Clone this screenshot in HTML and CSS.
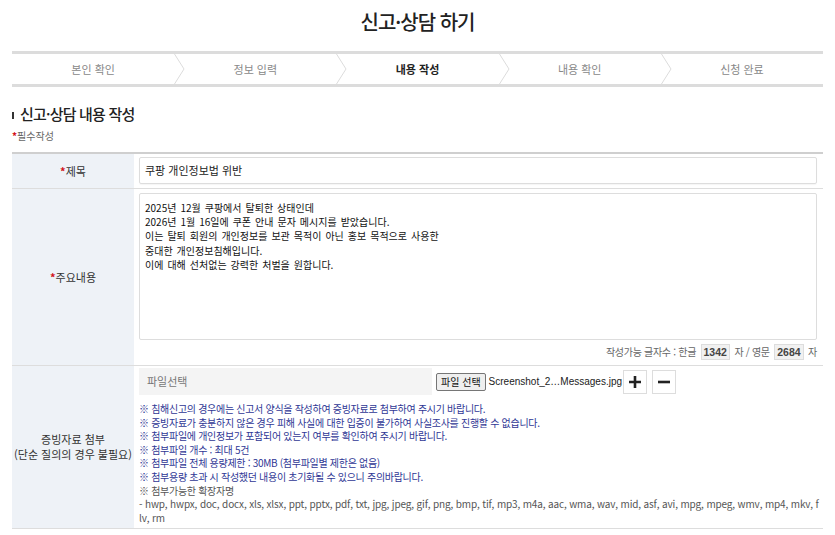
FILE: index.html
```html
<!DOCTYPE html>
<html lang="ko">
<head>
<meta charset="utf-8">
<title>신고·상담 하기</title>
<link rel="stylesheet" href="styles.css">
</head>
<body>
<div class="page">
  <h1 class="page-title">신고·상담 하기</h1>

  <ol class="steps">
    <li class="step">본인 확인<svg class="chev" width="11" height="30" viewBox="0 0 11 30"><polyline points="0.5,0 10,15 0.5,30" fill="none" stroke="#dcdcdc" stroke-width="1"/></svg></li>
    <li class="step">정보 입력<svg class="chev" width="11" height="30" viewBox="0 0 11 30"><polyline points="0.5,0 10,15 0.5,30" fill="none" stroke="#dcdcdc" stroke-width="1"/></svg></li>
    <li class="step on">내용 작성<svg class="chev" width="11" height="30" viewBox="0 0 11 30"><polyline points="0.5,0 10,15 0.5,30" fill="none" stroke="#dcdcdc" stroke-width="1"/></svg></li>
    <li class="step">내용 확인<svg class="chev" width="11" height="30" viewBox="0 0 11 30"><polyline points="0.5,0 10,15 0.5,30" fill="none" stroke="#dcdcdc" stroke-width="1"/></svg></li>
    <li class="step">신청 완료</li>
  </ol>

  <h2 class="sec-title"><span class="sec-bar"></span>신고·상담 내용 작성</h2>
  <p class="req"><span class="star">*</span>필수작성</p>

  <table class="form">
    <tr class="row-subject">
      <th><span class="star">*</span>제목</th>
      <td><div class="field">쿠팡 개인정보법 위반</div></td>
    </tr>
    <tr class="row-body">
      <th><span class="star">*</span>주요내용</th>
      <td>
        <div class="area">2025년 12월 쿠팡에서 탈퇴한 상태인데
2026년 1월 16일에 쿠폰 안내 문자 메시지를 받았습니다.
이는 탈퇴 회원의 개인정보를 보관 목적이 아닌 홍보 목적으로 사용한
중대한 개인정보침해입니다.
이에 대해 선처없는 강력한 처벌을 원합니다.</div>
        <div class="counter">작성가능 글자수 : 한글 <span class="num">1342</span> 자 / 영문 <span class="num">2684</span> 자</div>
      </td>
    </tr>
    <tr class="row-file">
      <th>증빙자료 첨부<br>(단순 질의의 경우 불필요)</th>
      <td>
        <div class="file-line">
          <div class="file-box">파일선택</div>
          <span class="file-btn">파일 선택</span>
          <span class="file-name">Screenshot_2…Messages.jpg</span>
          <span class="sq-btn"><svg width="12" height="12" viewBox="0 0 12 12"><path d="M6 0v12M0 6h12" stroke="#222" stroke-width="2.6"/></svg></span>
          <span class="sq-btn"><svg width="12" height="12" viewBox="0 0 12 12"><path d="M0 6h12" stroke="#222" stroke-width="2.6"/></svg></span>
        </div>
        <ul class="notes">
          <li class="blue">※ 침해신고의 경우에는 신고서 양식을 작성하여 증빙자료로 첨부하여 주시기 바랍니다.</li>
          <li class="blue">※ 증빙자료가 충분하지 않은 경우 피해 사실에 대한 입증이 불가하여 사실조사를 진행할 수 없습니다.</li>
          <li class="blue">※ 첨부파일에 개인정보가 포함되어 있는지 여부를 확인하여 주시기 바랍니다.</li>
          <li class="blue">※ 첨부파일 개수 : 최대 5건</li>
          <li class="blue">※ 첨부파일 전체 용량제한 : 30MB (첨부파일별 제한은 없음)</li>
          <li class="blue">※ 첨부용량 초과 시 작성했던 내용이 초기화될 수 있으니 주의바랍니다.</li>
          <li>※ 첨부가능한 확장자명</li>
          <li class="ext">- hwp, hwpx, doc, docx, xls, xlsx, ppt, pptx, pdf, txt, jpg, jpeg, gif, png, bmp, tif, mp3, m4a, aac, wma, wav, mid, asf, avi, mpg, mpeg, wmv, mp4, mkv, flv, rm</li>
        </ul>
      </td>
    </tr>
  </table>
</div>
</body>
</html>
```

FILE: styles.css
```css
* {
  box-sizing: border-box;
}

body {
  margin: 0;
  background: #fff;
  color: #333;
  font-family: "Noto Sans CJK KR", "Noto Sans", sans-serif;
}

.page {
  width: 811px;
  margin: 0 auto;
}

.page-title {
  margin: 0;
  height: 51px;
  padding-top: 8px;
  text-align: center;
  font-size: 20px;
  font-weight: 500;
  line-height: 28px;
  letter-spacing: -1px;
  color: #222;
}

/* steps */
.steps {
  display: flex;
  margin: 0;
  padding: 0;
  list-style: none;
  border-top: 3px solid #dcdcdc;
  border-bottom: 3px solid #dcdcdc;
}
.step {
  position: relative;
  flex: 1;
  height: 30px;
  line-height: 30px;
  text-align: center;
  font-size: 11px;
  color: #888;
}
.step.on {
  color: #222;
  font-weight: 700;
}
.chev {
  position: absolute;
  top: 0;
  right: -11px;
  z-index: 1;
}

/* section head */
.sec-title {
  margin: 17px 0 0;
  font-size: 15px;
  font-weight: 500;
  line-height: 20px;
  letter-spacing: -0.8px;
  color: #222;
}
.sec-bar {
  display: inline-block;
  width: 2px;
  height: 7px;
  margin-right: 6px;
  background: #333;
  vertical-align: 1px;
}
.req {
  margin: 5px 0 9px;
  font-size: 10px;
  line-height: 14px;
  color: #666;
}
.star {
  color: #d2121a;
  font-weight: 700;
}

/* form table */
.form {
  width: 100%;
  border-collapse: collapse;
  border-top: 2px solid #cfcfcf;
  border-bottom: 1px solid #ddd;
}
.form tr {
  border-bottom: 1px solid #ddd;
}
.form th {
  width: 122px;
  padding: 0;
  background: #eef2f7;
  font-size: 11px;
  font-weight: 400;
  line-height: 15px;
  color: #333;
}
.form td {
  padding: 3px 6px 4px 5px;
  vertical-align: top;
}

.field {
  height: 27px;
  padding: 0 5px;
  border: 1px solid #ddd;
  border-radius: 2px;
  font-size: 11px;
  line-height: 25px;
  color: #222;
  box-shadow: 0 1px 1px rgba(0, 0, 0, 0.04);
}

.row-body td {
  padding-top: 4px;
}
.area {
  height: 147px;
  padding: 7px 5px;
  border: 1px solid #ddd;
  border-radius: 2px;
  white-space: pre-line;
  font-size: 10px;
  line-height: 14.2px;
  word-spacing: 1.2px;
  color: #111;
}
.counter {
  margin-top: 3px;
  height: 18px;
  text-align: right;
  font-size: 10px;
  line-height: 18px;
  letter-spacing: -0.3px;
  color: #666;
}
.num {
  display: inline-block;
  height: 16px;
  padding: 0 2px;
  margin: 0 2px;
  background: #f1f1f1;
  border: 1px solid #ddd;
  font-family: "Liberation Sans", Arial, sans-serif;
  font-size: 10.5px;
  font-weight: 700;
  line-height: 14px;
  letter-spacing: 0;
  color: #444;
}

/* attachments */
.row-file td {
  padding-top: 2px;
}
.file-line {
  display: flex;
  align-items: center;
  height: 27px;
}
.file-box {
  width: 293px;
  height: 27px;
  padding-left: 8px;
  background: #f4f4f4;
  font-size: 11px;
  line-height: 27px;
  color: #777;
}
.file-btn {
  margin-left: 4px;
  height: 18px;
  padding: 0 4px;
  background: #efefef;
  border: 1px solid #767676;
  border-radius: 2px;
  font-size: 10px;
  line-height: 16px;
  color: #111;
}
.file-name {
  margin-left: 3px;
  font-family: "Liberation Sans", Arial, sans-serif;
  font-size: 10px;
  color: #222;
}
.sq-btn {
  display: flex;
  align-items: center;
  justify-content: center;
  width: 24px;
  height: 24px;
  margin-left: 1px;
  border: 1px solid #ddd;
  background: #fff;
}
.sq-btn + .sq-btn {
  margin-left: 5px;
}

.notes {
  margin: 7px 0 0;
  padding: 0;
  list-style: none;
  font-size: 10px;
  line-height: 13.6px;
  letter-spacing: -0.3px;
  color: #555;
}
.notes .blue {
  color: #2f3795;
}
.notes .ext {
  word-break: break-all;
  letter-spacing: -0.15px;
  margin-right: -2px;
}
```
